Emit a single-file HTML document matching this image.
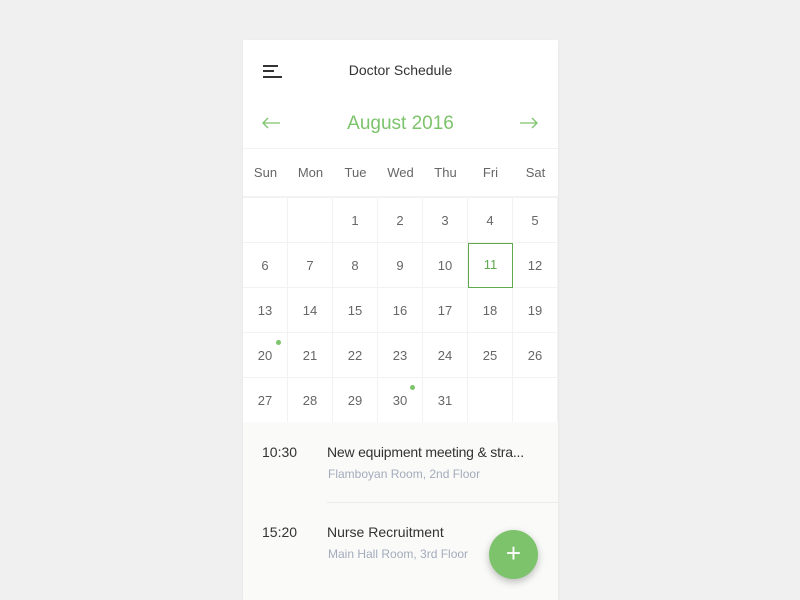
<!DOCTYPE html>
<html><head><style>
*{margin:0;padding:0;box-sizing:border-box}
body{width:800px;height:600px;background:#f0f0f0;font-family:"Liberation Sans",sans-serif;position:relative;overflow:hidden}
.card{position:absolute;left:243px;top:40px;width:315px;height:560px;background:#fff;box-shadow:0 1px 3px rgba(0,0,0,.06)}
.abs{position:absolute}
.t{position:absolute;white-space:nowrap}
.cell{position:absolute;width:45px;height:45px;text-align:center;line-height:45px;font-size:13px;color:#666;border-right:1px solid #f2f2f2;border-bottom:1px solid #f2f2f2}
.list{position:absolute;left:0;top:382px;width:315px;height:178px;background:#fafaf9}
</style></head><body>
<div class="card">
  <div class="abs" style="left:20px;top:25px;width:15px;height:2px;background:#333"></div>
  <div class="abs" style="left:20px;top:30px;width:11px;height:2px;background:#333"></div>
  <div class="abs" style="left:20px;top:36px;width:19px;height:2px;background:#333"></div>
  <div class="t" style="left:0;width:315px;text-align:center;top:22px;font-size:14px;color:#333">Doctor Schedule</div>
  <svg class="abs" style="left:18px;top:75px" width="22" height="16"><path d="M2 8H19M7 3L2 8L7 13" stroke="#7dc36b" stroke-width="1.3" fill="none"/></svg>
  <svg class="abs" style="left:275px;top:75px" width="22" height="16"><path d="M2 8H19M14 3L19 8L14 13" stroke="#7dc36b" stroke-width="1.3" fill="none"/></svg>
  <div class="t" style="left:0;width:315px;text-align:center;top:73px;font-size:19px;color:#7dc36b">August 2016</div>
  <div class="abs" style="left:0;top:108px;width:315px;height:1px;background:#f2f2f2"></div>
  <div id="g"></div>
  <div class="list">
    <div class="t" style="left:19px;top:22px;font-size:14px;color:#333">10:30</div>
    <div class="t" style="left:84px;top:22px;font-size:14px;color:#333;letter-spacing:-0.2px">New equipment meeting &amp; stra...</div>
    <div class="t" style="left:85px;top:45px;font-size:12px;color:#a3abbb">Flamboyan Room, 2nd Floor</div>
    <div class="abs" style="left:84px;top:80px;width:231px;height:1px;background:#ececec"></div>
    <div class="t" style="left:19px;top:102px;font-size:14px;color:#333">15:20</div>
    <div class="t" style="left:84px;top:102px;font-size:14px;color:#333">Nurse Recruitment</div>
    <div class="t" style="left:85px;top:125px;font-size:12px;color:#a3abbb">Main Hall Room, 3rd Floor</div>
    <div class="abs" style="left:246px;top:108px;width:49px;height:49px;border-radius:50%;background:#7dc36b;box-shadow:0 3px 8px rgba(0,0,0,.25);color:#fff;text-align:center;line-height:47px;font-size:26px">+</div>
  </div>
</div>
<script>
var g=document.getElementById('g'),h='';
var d=['Sun','Mon','Tue','Wed','Thu','Fri','Sat'];
for(var i=0;i<7;i++)h+='<div class="cell" style="border-right:none;left:'+(i*45)+'px;top:109px;height:48px;line-height:48px">'+d[i]+'</div>';
h+='<div class="abs" style="left:0;top:157px;width:315px;height:1px;background:#f2f2f2"></div>';
for(var r=0;r<5;r++)for(var c=0;c<7;c++){var n=r*7+c-1;var txt=(n>=1&&n<=31)?n:'';
var st='left:'+(c*45)+'px;top:'+(158+r*45)+'px;';
if(n==11)st+='border:1.5px solid #5fa84e;color:#5fa84e;line-height:42px;';
h+='<div class="cell" style="'+st+'">'+txt+'</div>';}
h+='<div class="abs" style="left:33px;top:300px;width:5px;height:5px;border-radius:50%;background:#7dc36b"></div>';
h+='<div class="abs" style="left:167px;top:345px;width:5px;height:5px;border-radius:50%;background:#7dc36b"></div>';
g.innerHTML=h;
</script>
</body></html>
